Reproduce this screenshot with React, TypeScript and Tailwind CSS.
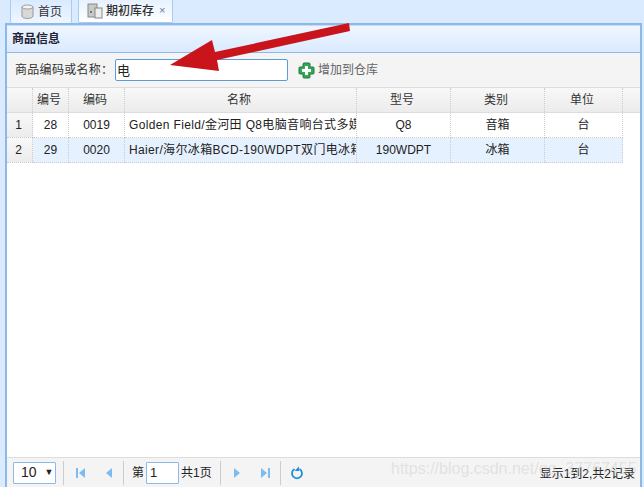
const columns = [
  { label: "", width: "w-[26px]" },
  { label: "编号", width: "w-[36px]" },
  { label: "编码", width: "w-[56px]" },
  { label: "名称", width: "w-[232px]" },
  { label: "型号", width: "w-[94px]" },
  { label: "类别", width: "w-[94px]" },
  { label: "单位", width: "w-[78px]" },
];

const rows = [
  ["1", "28", "0019", "Golden Field/金河田 Q8电脑音响台式多媒", "Q8", "音箱", "台"],
  ["2", "29", "0020", "Haier/海尔冰箱BCD-190WDPT双门电冰箱", "190WDPT", "冰箱", "台"],
];

const PagerSep = () => <div className="mx-[5px] h-[24px] w-[1px] shrink-0 bg-[#ccc]" />;

const SkipIcon = ({ flip = false }: { flip?: boolean }) => (
  <svg width="10" height="12" viewBox="0 0 10 12" className={flip ? "rotate-180" : ""}>
    <rect x="0" y="1" width="2" height="10" fill="#7dbcf2" />
    <path d="M9 1v10L3 6z" fill="#7dbcf2" />
  </svg>
);

const StepIcon = ({ flip = false }: { flip?: boolean }) => (
  <svg width="8" height="12" viewBox="0 0 8 12" className={flip ? "rotate-180" : ""}>
    <path d="M7 1v10L1 6z" fill="#7dbcf2" />
  </svg>
);

export default function App() {
  return (
    <div className="relative flex h-[487px] w-[644px] flex-col overflow-hidden bg-[#daeaff] font-['Liberation_Sans','Noto_Sans_CJK_SC',sans-serif] text-[12px] text-[#222]">
      {/* tabs */}
      <div className="flex h-[23px] shrink-0 items-end gap-[6px] pl-[10px]">
        <div className="flex h-[23px] w-[62px] items-center gap-[4px] rounded-b-[2px] border-x border-[#a9cdf2] bg-gradient-to-b from-[#daeaff] to-[#eff6ff] pl-[10px]">
          <svg width="13" height="15" viewBox="0 0 13 15">
            <path d="M1 3v9c0 1.500 2.500 2.500 5.500 2.500S12 13.500 12 12V3z" fill="#d8d8d8" stroke="#999" />
            <ellipse cx="6.500" cy="3" rx="5.500" ry="2" fill="#f4f4f4" stroke="#999" />
          </svg>
          <span className="text-[#333]">首页</span>
        </div>
        <div className="flex h-[24px] w-[95px] items-center rounded-b-[2px] border-x border-b border-[#a9cdf2] bg-gradient-to-b from-[#e6f1ff] to-white pl-[8px]">
          <svg width="16" height="16" viewBox="0 0 16 16">
            <rect x="1" y="1" width="9" height="13" fill="#c8c8c8" stroke="#888" />
            <rect x="8" y="5" width="7" height="10" fill="#eee" stroke="#888" />
            <rect x="3" y="8" width="2" height="2" fill="#2aa84a" />
          </svg>
          <span className="ml-[3px] font-medium text-[#333]">期初库存</span>
          <span className="ml-[5px] text-[11px] leading-none text-[#5a7fa8]">×</span>
        </div>
      </div>

      {/* panel */}
      <div className="ml-[5px] mr-[2px] flex min-h-0 flex-1 flex-col border-t-[2px] border-r-[2px] border-l-[2px] border-[#8db9e8] bg-white">
        <div className="flex h-[28px] shrink-0 items-center border-t border-[#c6dcf5] border-b border-b-[#8db9e8] bg-gradient-to-b from-[#eff6ff] to-[#daeaff] pl-[5px] font-bold text-[#223]">
          商品信息
        </div>
        <div className="flex h-[35px] shrink-0 items-center border-b border-[#ddd] bg-[#f4f4f4] pl-[8px]">
          <span className="w-[100px] whitespace-nowrap tracking-[0.3px] text-[#333]">商品编码或名称：</span>
          <input
            readOnly
            value="电"
            className="h-[22px] w-[173px] rounded-[2px] border border-[#5b9bd8] bg-white pb-[2px] pl-[1px] text-[13px] text-[#222] outline-none"
          />
          <svg width="17" height="17" viewBox="0 0 17 17" className="ml-[10px]">
            <path
              d="M6 1h5a1 1 0 0 1 1 1v3h3a1 1 0 0 1 1 1v5a1 1 0 0 1-1 1h-3v3a1 1 0 0 1-1 1H6a1 1 0 0 1-1-1v-3H2a1 1 0 0 1-1-1V6a1 1 0 0 1 1-1h3V2a1 1 0 0 1 1-1z"
              fill="#35a853"
              stroke="#1f7a46"
            />
            <path d="M7 4h3v3h3v3h-3v3H7v-3H4V7h3z" fill="white" />
          </svg>
          <span className="ml-[3px] text-[#666]">增加到仓库</span>
        </div>

        {/* grid */}
        <div className="flex h-[25px] shrink-0 border-b border-[#ddd] bg-gradient-to-b from-[#f8f8f8] to-[#ececec]">
          {columns.map((c, i) => (
            <div
              key={i}
              className={`${c.width} flex shrink-0 items-center justify-center border-r border-dotted border-[#ccc] pr-[3px] text-[#333]`}
            >
              {c.label}
            </div>
          ))}
        </div>
        {rows.map((row, r) => (
          <div key={r} className="flex h-[25px] shrink-0">
            {row.map((cell, i) => (
              <div
                key={i}
                className={`${columns[i].width} flex shrink-0 items-center overflow-hidden whitespace-nowrap border-r border-b border-dotted border-[#ccc] ${
                  i === 3 ? "pl-[4px] tracking-[0.35px]" : "justify-center"
                } ${
                  i === 0
                    ? "bg-gradient-to-b from-[#f8f8f8] to-[#ececec] pr-[2px]"
                    : r === 1
                      ? "bg-[#e6f1ff]"
                      : "bg-white"
                }`}
              >
                {cell}
              </div>
            ))}
          </div>
        ))}
        <div className="flex-1" />

        {/* pager */}
        <div className="flex h-[30px] shrink-0 items-center border-t border-[#ddd] bg-[#f4f4f4] pl-[6px]">
          <div className="flex h-[22px] w-[43px] items-center rounded-[1px] border border-[#8db9e8] bg-white pl-[7px] text-[14px]">
            10
            <span className="ml-[8px] text-[9px]">▼</span>
          </div>
          <div className="ml-[2px]">
            <PagerSep />
          </div>
          <div className="ml-[7px] flex w-[42px] items-center gap-[19px]">
            <SkipIcon />
            <StepIcon />
          </div>
          <PagerSep />
          <span className="ml-[3px]">第</span>
          <input
            readOnly
            value="1"
            className="mx-[2px] h-[22px] w-[33px] rounded-[1px] border border-[#8db9e8] bg-white pl-[3px] text-[13px] outline-none"
          />
          <span>共1页</span>
          <div className="ml-[3px]">
            <PagerSep />
          </div>
          <div className="ml-[7px] flex w-[42px] items-center gap-[19px]">
            <StepIcon flip />
            <SkipIcon flip />
          </div>
          <PagerSep />
          <svg width="14" height="14" viewBox="0 0 14 14" className="ml-[4px]">
            <path d="M4.500 3a5 5 0 1 0 5 0" fill="none" stroke="#1e8fd8" strokeWidth="1.800" />
            <path d="M9 0.500v4.500h-4.500z" fill="#1e8fd8" />
          </svg>
          <span className="ml-auto mr-[5px] pt-[3px] text-[#222]">显示1到2,共2记录</span>
        </div>
      </div>

      {/* red arrow drawn over the screenshot */}
      <svg width="644" height="487" viewBox="0 0 644 487" className="pointer-events-none absolute top-0 left-0">
        <path d="M349 23 350 31 217 60 219 71 170 65 212 40 215 52z" fill="#c8141a" />
      </svg>
      {/* watermark */}
      <span className="pointer-events-none absolute top-[459px] left-[391px] whitespace-nowrap text-[16px] leading-[20px] text-[#c4c4c4]/40">
        https://blog.csdn.net/qq_37767455
      </span>
    </div>
  );
}
